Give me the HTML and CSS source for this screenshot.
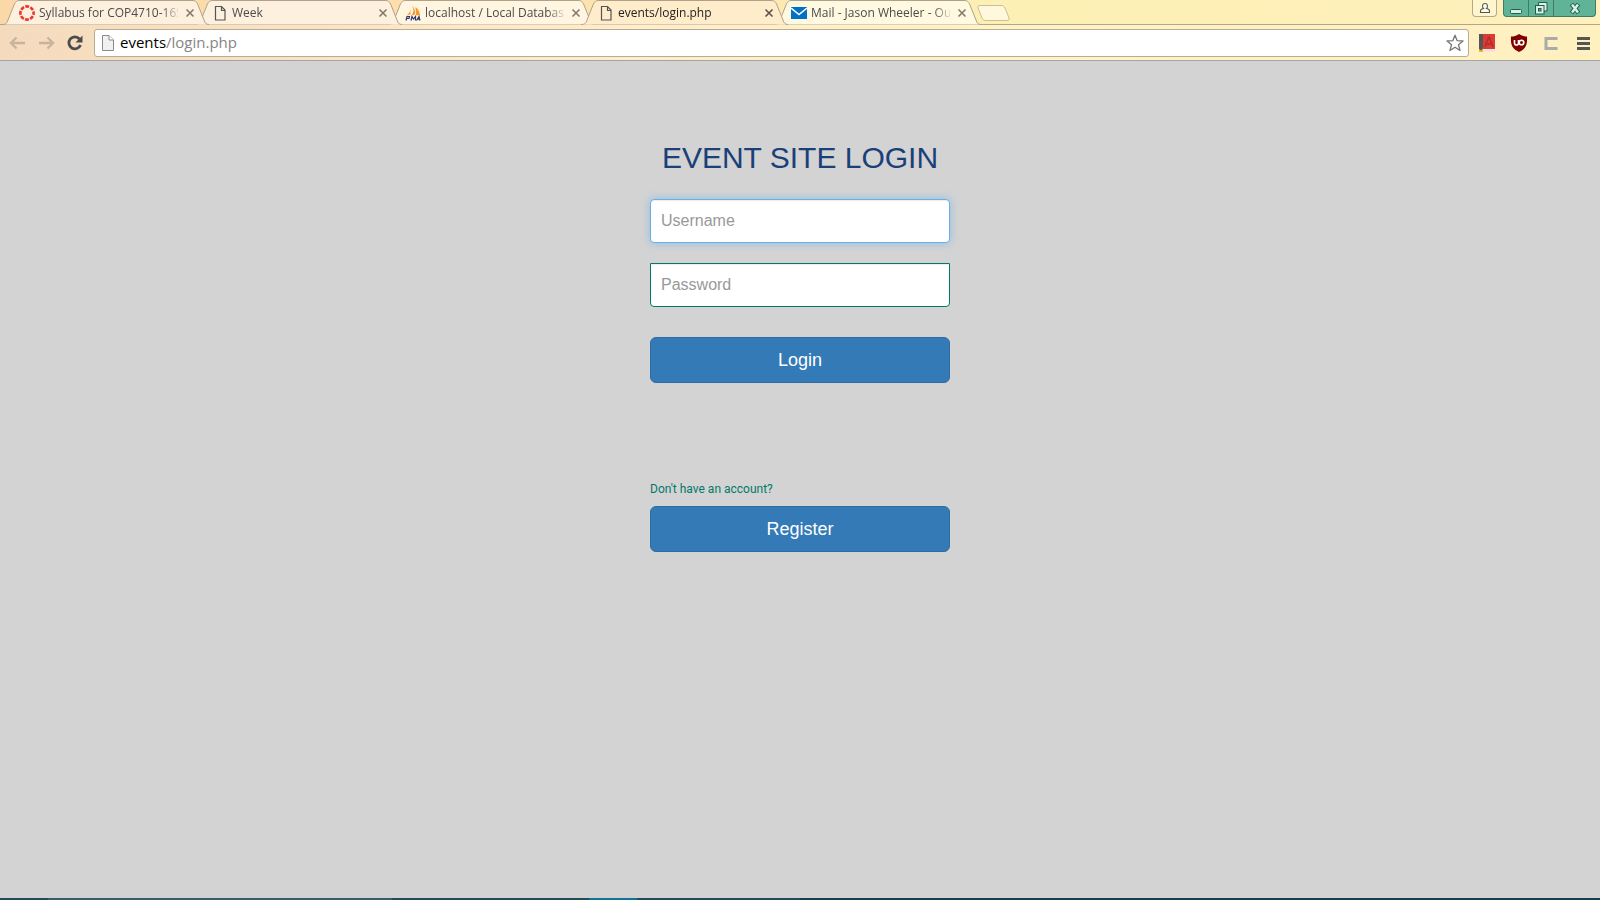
FILE: index.html
```html
<!DOCTYPE html>
<html lang="en">
<head>
<meta charset="utf-8">
<title>events/login.php</title>
<link rel="stylesheet" href="styles.css">
</head>
<body>
<svg class="defs" aria-hidden="true">
  <symbol id="shape" viewBox="0 0 207 25"><path d="M0 24.5C4 24.5 5 23 6 20L12 5C13.500 1.500 15 .5 18 .5H190C193 .5 194.500 1.500 196 5L202 20C203 23 204 24.500 207 24.500"/></symbol>
  <symbol id="page" viewBox="0 0 16 16"><path d="M3.500 1.500H9.500L13 5V15H3.500ZM9.500 1.500V5.500H13" fill="none" stroke="#555" stroke-width="1.200"/></symbol>
  <symbol id="x" viewBox="0 0 10 10"><path d="M1.500 1.500L8.500 8.500M8.500 1.500L1.500 8.500" fill="none" stroke="currentColor" stroke-width="1.600"/></symbol>
</svg>
<header class="browser">
  <div class="strip">
    <nav class="tabs" aria-label="Tabs">
      <div class="tab t1"><svg class="shape"><use href="#shape"/></svg>
        <svg class="icon" viewBox="0 0 16 16"><circle cx="8" cy="8" r="6.600" fill="none" stroke="#e63a2e" stroke-width="2.600" stroke-dasharray="3.900 1.284" stroke-dashoffset="1.950"/></svg>
        <span class="title">Syllabus for COP4710-16S</span><button class="close" aria-label="Close tab"><svg><use href="#x"/></svg></button></div>
      <div class="tab t2"><svg class="shape"><use href="#shape"/></svg>
        <svg class="icon"><use href="#page"/></svg>
        <span class="title">Week</span><button class="close" aria-label="Close tab"><svg><use href="#x"/></svg></button></div>
      <div class="tab t3"><svg class="shape"><use href="#shape"/></svg>
        <svg class="icon" viewBox="0 0 16 16"><path d="M5.500 2C6 5 5 8 1.500 10.500L5.500 9.500ZM7 .5C9 4 9 7 6.500 10.500L10 9.500C10.500 6 9.500 3 7 .5ZM10.500 2C14 5 14.500 7 15 10.500L11 10Z" fill="#f79a2d"/><path d="M1 15.500L2 11.500H4.500L4 13.500H2M6 15.500L7 11.500L8.500 14L10.500 11.500V15.500M11.500 15.500L14 11.500L15 15.500M12 14.200H15" fill="none" stroke="#33386b" stroke-width="1.200"/></svg>
        <span class="title">localhost / Local Database</span><button class="close" aria-label="Close tab"><svg><use href="#x"/></svg></button></div>
      <div class="tab active"><svg class="shape"><use href="#shape"/></svg>
        <svg class="icon"><use href="#page"/></svg>
        <span class="title">events/login.php</span><button class="close" aria-label="Close tab"><svg><use href="#x"/></svg></button></div>
      <div class="tab t5"><svg class="shape"><use href="#shape"/></svg>
        <svg class="icon" viewBox="0 0 16 16"><path d="M0 2H16V14H0Z" fill="#0072c6"/><path d="M0 3L8 9.500L16 3" fill="none" stroke="#fff" stroke-width="1.600"/></svg>
        <span class="title">Mail - Jason Wheeler - Ou</span><button class="close" aria-label="Close tab"><svg><use href="#x"/></svg></button></div>
      <button class="new-tab" aria-label="New tab"><svg viewBox="0 0 33 17"><path d="M3 .5H24C26 .5 27 1.500 28 3L32 13C32.500 15 32 15.500 30 15.500H9C7 15.500 6 15 5 13L1 3C.5 1.500 1 .5 3 .5Z" fill="#fff8dc" stroke="#c9be94"/></svg></button>
    </nav>
    <div class="window-controls">
      <button class="profile" aria-label="Profile"><svg viewBox="0 0 12 12"><path d="M1.500 10.500V9C1.500 7.500 3 6.800 4.500 6.500C3 5 3 1.500 6 1.500S9 5 7.500 6.500C9 6.800 10.500 7.500 10.500 9V10.500Z" fill="#fffbe8" stroke="#555" stroke-width="1.100"/></svg></button>
      <div class="sys">
        <button class="min" aria-label="Minimize"><svg viewBox="0 0 14 14"><rect x="1.500" y="8.500" width="11" height="4" rx="1" fill="#d8f1e6" stroke="#235c4b"/></svg></button>
        <button class="restore" aria-label="Restore"><svg viewBox="0 0 14 14"><path d="M4.500 4V1.500H13V10H10" fill="#d8f1e6" stroke="#235c4b"/><rect x="1.500" y="4.500" width="8.500" height="8.500" fill="#d8f1e6" stroke="#235c4b"/><rect x="4.500" y="7.500" width="2.500" height="2.500" fill="#61b398" stroke="#235c4b"/></svg></button>
        <button class="shut" aria-label="Close"><svg viewBox="0 0 14 14"><path d="M3.500 3L10.500 12M10.500 3L3.500 12" stroke="#235c4b" stroke-width="4.400"/><path d="M4 3.500L10 11.500M10 3.500L4 11.500" stroke="#d8f1e6" stroke-width="2.400"/></svg></button>
      </div>
    </div>
  </div>
  <div class="toolbar">
    <button class="nav" aria-label="Back"><svg viewBox="0 0 18 18"><path d="M17 9H3M8.500 3.500L3 9L8.500 14.500" fill="none" stroke="#c8b49c" stroke-width="2.400"/></svg></button>
    <button class="nav" aria-label="Forward"><svg viewBox="0 0 18 18"><path d="M2 9H16M10.500 3.500L16 9L10.500 14.500" fill="none" stroke="#c8b49c" stroke-width="2.400"/></svg></button>
    <button class="nav" aria-label="Reload"><svg viewBox="0 0 18 18"><path d="M13.500 5A6 6 0 1 0 14.500 11" fill="none" stroke="#4c4c4c" stroke-width="2.800"/><path d="M16.500 1.500V8.500H9.500Z" fill="#4c4c4c"/></svg></button>
    <div class="omnibox">
      <svg class="doc" viewBox="0 0 16 16"><path d="M2.500 .5H9L13.500 5V15.500H2.500Z" fill="#f1f1f1" stroke="#8a8a8a"/><path d="M9 .5V5H13.500" fill="#fff" stroke="#8a8a8a"/></svg>
      <span class="url"><b>events</b>/login.php</span>
      <button class="star" aria-label="Bookmark"><svg viewBox="0 0 18 18"><path d="M9 1.200L11.200 6.700L17 7L12.500 10.700L14 16.500L9 13.200L4 16.500L5.500 10.700L1 7L6.800 6.700Z" fill="#fff" stroke="#777" stroke-width="1.300" stroke-linejoin="round"/></svg></button>
    </div>
    <div class="extensions">
      <button aria-label="Dictionary"><svg viewBox="0 0 18 20"><path d="M1 1H5V19H1Z" fill="#555"/><path d="M5 1H17V16H5Z" fill="#db3b34"/><path d="M5 16H17V18.500H5Z" fill="#e8e3e1"/><path d="M7 14L10.500 4.500H11.500L15 14M8.500 11H13.500" fill="none" stroke="#b52d29" stroke-width="1.600"/><path d="M1 19V16L3 17.500L5 15.500V19Z" fill="#f0b72d"/></svg></button>
      <button aria-label="Content blocker"><svg viewBox="0 0 18 20"><path d="M9 1C12 3 14 3.500 17 3.500C17.500 12 16 15.500 9 19C2 15.500 .5 12 1 3.500C4 3.500 6 3 9 1Z" fill="#800000"/><path d="M4.500 7V10C4.500 12.700 8.500 12.700 8.500 10V7" fill="none" stroke="#fff" stroke-width="1.600"/><circle cx="11.500" cy="9.500" r="2.300" fill="none" stroke="#fff" stroke-width="1.600"/></svg></button>
      <button aria-label="Extension"><svg viewBox="0 0 18 20"><path d="M15.500 5.500H4V15.500H15.500" fill="none" stroke="#aaa" stroke-width="3"/></svg></button>
      <button aria-label="Menu"><svg viewBox="0 0 18 20"><path d="M3 5.500H16M3 10.500H16M3 15.500H16" fill="none" stroke="#555" stroke-width="3"/></svg></button>
    </div>
  </div>
</header>
<main class="content">
  <form class="login">
    <h2>EVENT SITE LOGIN</h2>
    <input class="user" type="text" placeholder="Username" aria-label="Username">
    <input class="pass" type="password" placeholder="Password" aria-label="Password">
    <button class="primary" type="button">Login</button>
    <p class="hint" id="hint">Don't have an account?</p>
    <button class="primary" type="button" aria-describedby="hint">Register</button>
  </form>
</main>
<footer class="taskbar"></footer>
</body>
</html>
```
FILE: styles.css
```css
* { box-sizing: border-box; }
body {
  margin: 0;
  min-height: 100vh;
  display: flex;
  flex-direction: column;
  background: #d3d3d3;
  font-family: "Liberation Sans", Arial, sans-serif;
}
button { border: 0; padding: 0; background: none; font: inherit; }
svg { display: block; }
.defs { display: none; }

.browser {
  height: 61px;
  border-bottom: 1px solid #a5a5a5;
  background: linear-gradient(90deg, #f5dbbd 0, #ffeccb 38%, #fff2c6 62%, #fff0c0 100%);
  font-family: "Open Sans", "Noto Sans", sans-serif;
}
.strip {
  height: 25px;
  display: flex;
  justify-content: space-between;
  align-items: flex-start;
  background: linear-gradient(90deg, #fbd8a8 0, #fde3b0 38%, #fdf0b4 62%, #fff0bc 100%);
  box-shadow: inset 0 -1px #b5a688;
}
.tabs { display: flex; padding-left: 2px; }
.tab {
  position: relative;
  isolation: isolate;
  flex: none;
  width: 207px;
  height: 25px;
  margin-right: -14px;
  padding: 0 14px 0 17px;
  display: flex;
  align-items: center;
  color: #4b4b4b;
  fill: #fdf0de;
}
.t1 { z-index: 4; }
.t2 { z-index: 3; }
.t3 { z-index: 2; fill: #fff5e0; }
.t5 { z-index: 1; fill: #fff9e2; }
.active { z-index: 5; color: #222; fill: #ffeccb; }
.shape {
  position: absolute;
  inset: 0;
  z-index: -1;
  width: 207px;
  height: 25px;
  stroke: #b0a288;
}
.icon { flex: none; width: 16px; height: 16px; margin-right: 4px; }
.title {
  width: 139px;
  overflow: hidden;
  white-space: nowrap;
  font-size: 12px;
  line-height: 24px;
  mask-image: linear-gradient(90deg, #000 122px, transparent 142px);
}
.close { margin-left: 7px; color: #85796b; }
.active .close { color: #5a5248; }
.close svg { width: 10px; height: 10px; }
.new-tab { margin: 5px 0 0 10px; width: 33px; height: 17px; }
.new-tab svg { width: 33px; height: 17px; }

.window-controls { display: flex; gap: 6px; padding-right: 4px; }
.profile {
  width: 25px;
  height: 17px;
  border: 1px solid #b5aa83;
  border-top: 0;
  border-radius: 0 0 4px 4px;
  background: #fff5cf;
  display: grid;
  place-items: center;
}
.profile svg { width: 12px; height: 12px; }
.sys {
  display: flex;
  height: 17px;
  border: 1px solid #3d7c68;
  border-top: 0;
  border-radius: 0 0 4px 4px;
  background: #61b398;
  overflow: hidden;
}
.sys button { width: 25px; display: grid; place-items: center; border-right: 1px solid #3d7c68; }
.sys .shut { width: 41px; border: 0; }
.sys svg { width: 14px; height: 14px; }

.toolbar { height: 35px; display: flex; align-items: center; padding: 0 8px; }
.nav { width: 18px; margin-right: 11px; }
.nav svg { width: 18px; height: 18px; }
.omnibox {
  flex: 1;
  height: 28px;
  display: flex;
  align-items: center;
  padding: 0 4px 0 5px;
  border: 1px solid #b9ac94;
  border-radius: 3px;
  background: #fff;
}
.nav + .omnibox { margin-left: -1px; }
.doc { width: 16px; height: 16px; margin-right: 4px; }
.url { flex: 1; padding-bottom: 2px; font-size: 15px; line-height: 24px; color: #858585; }
.url b { font-weight: normal; color: #000; }
.star svg { width: 18px; height: 18px; }
.extensions { display: flex; gap: 14px; margin-left: 9px; }
.extensions svg { width: 18px; height: 20px; }

.content { flex: 1; padding: 80px 16px 20px; }
.login { max-width: 300px; margin: 0 auto; display: flex; flex-direction: column; }
h2 {
  margin: 0 0 25px;
  font-size: 30px;
  line-height: 33px;
  font-weight: normal;
  text-align: center;
  white-space: nowrap;
  color: #1a4079;
}
.login input {
  width: 100%;
  height: 44px;
  padding: 10px;
  border: 1px solid #00796b;
  border-radius: 4px;
  background: #fff;
  box-shadow: inset 0 1px 1px rgba(0, 0, 0, .075);
  font: 16px/22px "Liberation Sans", Arial, sans-serif;
}
.login input::placeholder { color: #999; opacity: 1; }
.login .user {
  margin-bottom: 20px;
  border-color: #66afe9;
  box-shadow: inset 0 1px 1px rgba(0, 0, 0, .075), 0 0 8px rgba(102, 175, 233, .6);
}
.login .pass { margin-bottom: 30px; border-radius: 0 0 4px 4px; }
.primary {
  height: 46px;
  border: 1px solid #2e6da4;
  border-radius: 6px;
  background: #337ab7;
  color: #fff;
  font-size: 18px;
  line-height: 24px;
}
.hint {
  margin: 98px 0 8px;
  font: 12px/17px Roboto, sans-serif;
  color: #00796b;
}
.taskbar {
  height: 2px;
  background: linear-gradient(90deg, #224b57 3%, #375d67 3% 24.500%, #224b57 24.500% 36.800%, #147390 36.800% 39.800%, #224b57 39.800% 50%, #143f50 50%);
}
```
